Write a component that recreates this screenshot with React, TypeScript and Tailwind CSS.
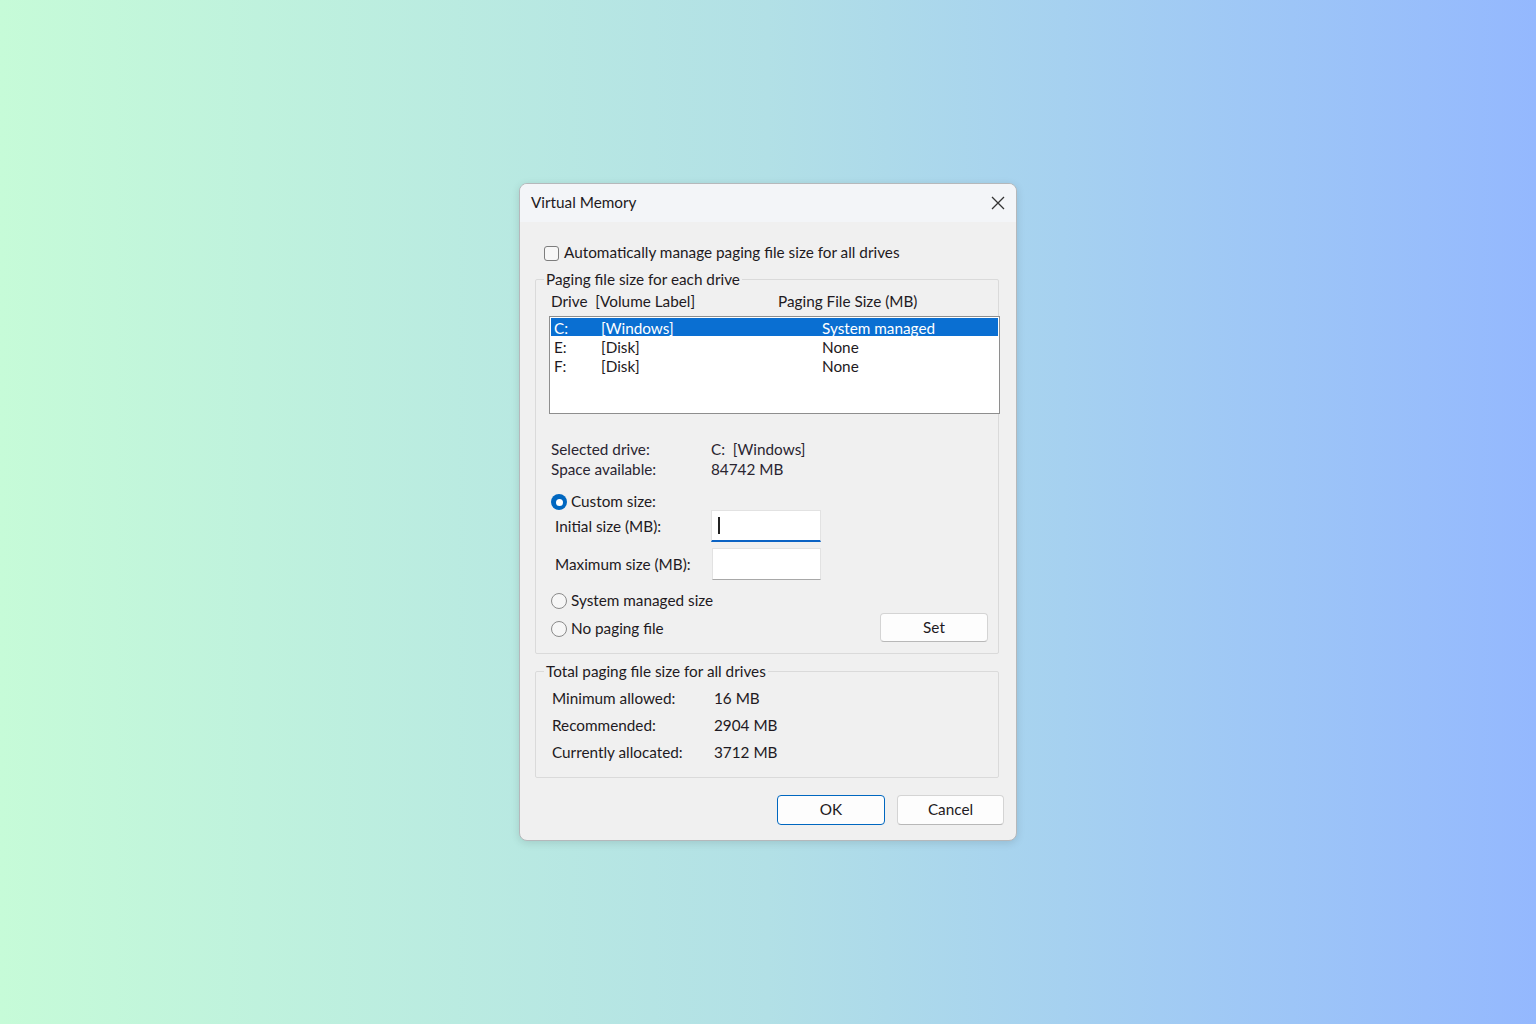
import React from "react";

const font = { fontFamily: "Lato, 'Noto Sans', sans-serif" };

function Radio({ checked }: { checked?: boolean }) {
  return checked ? (
    <span className="w-[16px] h-[16px] rounded-full bg-[#0067c0] flex items-center justify-center shrink-0">
      <span className="w-[7px] h-[7px] rounded-full bg-white" />
    </span>
  ) : (
    <span className="w-[16px] h-[16px] rounded-full border border-[#8a8a8a] bg-[#f6f6f6] shrink-0" />
  );
}

export default function App() {
  return (
    <div
      className="w-full h-[1024px] flex items-center justify-center bg-gradient-to-r from-[#c6fbd8] via-[#b2e0e6] to-[#94b8fe] text-[#1e1a22]"
      style={font}
    >
      <div className="w-[498px] h-[658px] rounded-[8px] border border-[#b5b8bb] bg-[#f0f0f0] shadow-[0_2px_8px_rgba(0,0,0,0.12)] flex flex-col overflow-hidden text-[15.3px] leading-none">
        {/* title bar */}
        <div className="h-[38px] bg-[#f3f5f8] flex items-center justify-between pl-[11px] pr-[9px] shrink-0">
          <span className="text-[15.3px]">Virtual Memory</span>
          <svg width="14" height="14" viewBox="0 0 14 14" className="mr-[2px]">
            <path d="M1 1 L13 13 M13 1 L1 13" stroke="#333" strokeWidth="1.3" />
          </svg>
        </div>
        {/* body */}
        <div className="flex flex-col pl-[15px] pr-[17px]">
          <div className="h-[24px] mt-[19px] flex items-center pl-[9px] gap-[5px]">
            <span className="w-[15px] h-[15px] rounded-[3px] border border-[#7d7d7d] bg-[#f7f7f7]" />
            <span>Automatically manage paging file size for all drives</span>
          </div>
          {/* group 1 */}
          <fieldset className="mt-[5px] border border-[#dadada] rounded-[2px] h-[384px] pl-[13px] pr-0">
            <legend className="ml-[-5px] px-[2px] leading-[18px]">Paging file size for each drive</legend>
            <div className="h-[22px] mt-[3px] flex items-center pl-[2px]">
              <span className="w-[227px]">Drive&nbsp;&nbsp;[Volume Label]</span>
              <span>Paging File Size (MB)</span>
            </div>
            <div className="mt-[3px] mr-[-2px] h-[98px] bg-white border border-[#8e8e8e] p-[1px]">
              <div className="h-[18px] pt-[4px] bg-[#0a6fd2] text-white flex items-center pl-[3px]">
                <span className="w-[47px]">C:</span>
                <span className="w-[221px]">[Windows]</span>
                <span>System managed</span>
              </div>
              <div className="h-[19px] pt-[4px] flex items-center pl-[3px]">
                <span className="w-[47px]">E:</span>
                <span className="w-[221px]">[Disk]</span>
                <span>None</span>
              </div>
              <div className="h-[19px] pt-[4px] flex items-center pl-[3px]">
                <span className="w-[47px]">F:</span>
                <span className="w-[221px]">[Disk]</span>
                <span>None</span>
              </div>
            </div>
            <div className="mt-[28px] flex flex-col gap-[4px] pl-[2px] text-[#2a2530]">
              <div className="h-[16px] flex items-center">
                <span className="w-[160px]">Selected drive:</span>
                <span>C:&nbsp;&nbsp;[Windows]</span>
              </div>
              <div className="h-[16px] flex items-center">
                <span className="w-[160px]">Space available:</span>
                <span>84742 MB</span>
              </div>
            </div>
            <div className="mt-[15px] h-[18px] flex items-center gap-[4px] pl-[2px]">
              <Radio checked />
              <span>Custom size:</span>
            </div>
            <div className="mt-[-1px] h-[32px] flex items-center pl-[6px]">
              <span className="w-[156px] pt-[2px]">Initial size (MB):</span>
              <div className="w-[110px] h-[32px] bg-white border border-[#e2e2e2] border-b-2 border-b-[#0b63c4] flex items-center pl-[6px]">
                <span className="w-[1.5px] h-[17px] bg-[#222]" />
              </div>
            </div>
            <div className="mt-[6px] h-[32px] flex items-center pl-[6px]">
              <span className="w-[157px] pt-[2px]">Maximum size (MB):</span>
              <div className="w-[109px] h-[32px] bg-white border border-[#e2e2e2] border-b-[#a8a8a8]" />
            </div>
            <div className="mt-[4px] flex items-start justify-between pr-[10px]">
              <div className="flex flex-col gap-[11px] pt-[8px]">
                <div className="h-[17px] flex items-center gap-[4px] pl-[2px]">
                  <Radio />
                  <span>System managed size</span>
                </div>
                <div className="h-[17px] flex items-center gap-[4px] pl-[2px]">
                  <Radio />
                  <span>No paging file</span>
                </div>
              </div>
              <div className="mt-[29px] w-[108px] h-[29px] bg-[#fdfdfd] border border-[#d4d4d4] border-b-[#b8b8b8] rounded-[4px] flex items-center justify-center">
                Set
              </div>
            </div>
          </fieldset>
          {/* group 2 */}
          <fieldset className="mt-[8px] border border-[#dadada] rounded-[2px] h-[116px] pl-[16px] pr-0">
            <legend className="ml-[-8px] px-[2px] leading-[18px]">Total paging file size for all drives</legend>
            <div className="flex flex-col mt-[5px]">
              <div className="h-[27px] flex items-center">
                <span className="w-[162px]">Minimum allowed:</span>
                <span>16 MB</span>
              </div>
              <div className="h-[27px] flex items-center">
                <span className="w-[162px]">Recommended:</span>
                <span>2904 MB</span>
              </div>
              <div className="h-[27px] flex items-center">
                <span className="w-[162px]">Currently allocated:</span>
                <span>3712 MB</span>
              </div>
            </div>
          </fieldset>
          <div className="mt-[17px] flex justify-end gap-[12px] mr-[-5px]">
            <div className="w-[108px] h-[30px] bg-[#fdfdfd] border border-[#0067c0] rounded-[4px] flex items-center justify-center">
              OK
            </div>
            <div className="w-[107px] h-[30px] bg-[#fdfdfd] border border-[#d4d4d4] border-b-[#b8b8b8] rounded-[4px] flex items-center justify-center">
              Cancel
            </div>
          </div>
        </div>
      </div>
    </div>
  );
}
